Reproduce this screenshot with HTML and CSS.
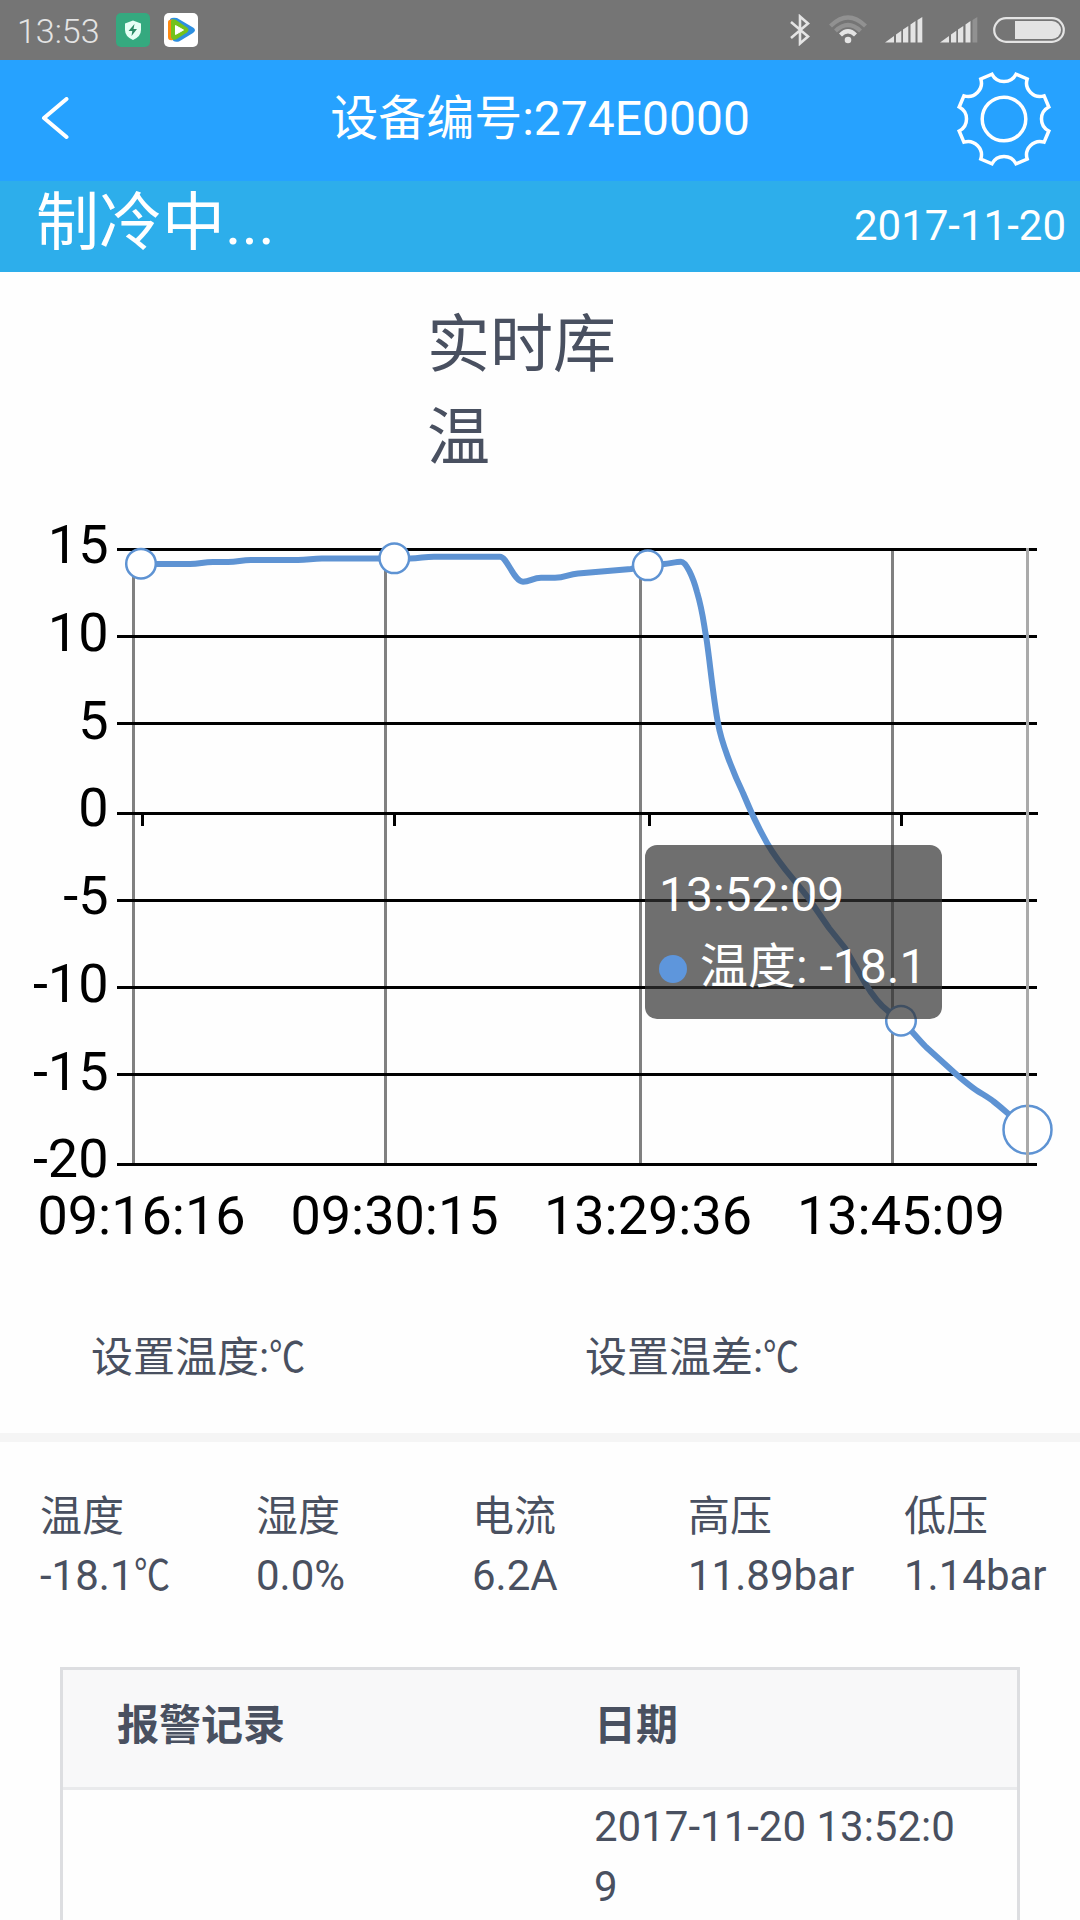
FILE: index.html
```
<!DOCTYPE html>
<html lang="zh-CN">
<head>
  <meta charset="UTF-8" />
  <meta name="viewport" content="width=device-width, initial-scale=1.0" />
  <title>设备编号:274E0000</title>
  <link rel="stylesheet" href="styles.css">
</head>
<body>
  <div class="status-bar">
    <span class="status-time">13:53</span>
    <svg class="app-icon" width="34" height="34" viewBox="0 0 34 34">
      <rect width="34" height="34" rx="5" fill="#35a97f"/>
      <path d="M17 7.500L25 10.500V17Q25 23.500 17 27Q9 23.500 9 17V10.500Z" fill="#e6fff5"/>
      <path d="M18.500 11L12.500 18H16.300L15.500 23L21 16H17.500Z" fill="#2b8a66"/>
    </svg>
    <svg class="app-icon" width="34" height="34" viewBox="0 0 34 34">
      <rect width="34" height="34" rx="5" fill="#fff"/>
      <path d="M6 6Q8 4 13 5L29 14.500Q33 17 29 20L15 28.500Q9 30 8 25Z" fill="#2d8fe0"/>
      <path d="M4 9Q4 6 9 6.500V27Q4 28 4 24Z" fill="#ff8a10"/>
      <path d="M7 8Q8 5 12 7L23 14.500Q26 17 23 19.500L12 26.500Q8 28 7 24Z" fill="#74c21c"/>
      <path d="M11.500 12.500L19.500 17L11.500 21.500Z" fill="#fff" stroke="#fff" stroke-linejoin="round"/>
    </svg>
    <div class="status-right">
      <svg width="20" height="32" viewBox="0 0 20 32" fill="none" stroke="#e4e4e4" stroke-width="2.600">
        <path d="M1 8L18 22.500L10 29.500V2.500L18 9.500L1 24"/>
      </svg>
      <svg class="wifi" width="38" height="32" viewBox="0 0 38 32" fill="none" stroke-width="4.200">
        <path d="M1.500 12Q19 -5 36.500 12" stroke="#919191"/>
        <path d="M6.500 17Q19 5 31.500 17" stroke="#919191"/>
        <path d="M11.500 21Q19 13.500 26.500 21" stroke="#e4e4e4"/>
        <circle cx="19" cy="26" r="3.300" fill="#e4e4e4"/>
      </svg>
      <svg class="signal" width="38" height="26" viewBox="0 0 38 26" fill="#e4e4e4">
        <path d="M0 25.500L9 19V25.500ZM11 17.500L16.300 13.800V25.500H11ZM18 12.500L23.300 9V25.500H18ZM25.500 7.500L30.500 4V25.500H25.500ZM32.500 3L37.300 0V25.500H32.500Z"/>
      </svg>
      <svg class="signal" width="38" height="26" viewBox="0 0 38 26" fill="#e4e4e4">
        <path d="M0 25.500L9 19V25.500ZM11 17.500L16.300 13.800V25.500H11ZM18 12.500L23.300 9V25.500H18ZM25.500 7.500L30.500 4V25.500H25.500Z"/>
        <path d="M32.500 3L37.300 0V25.500H32.500Z" fill="#919191"/>
      </svg>
      <svg class="battery" width="72" height="26" viewBox="0 0 72 26">
        <rect x="1.200" y="1.200" width="69.600" height="23.600" rx="11.800" fill="none" stroke="#e4e4e4" stroke-width="2.200"/>
        <path d="M22 4H59A9 9 0 0 1 59 22H22Z" fill="#e4e4e4"/>
      </svg>
    </div>
  </div>

  <header class="header">
    <svg class="back" width="28" height="44" viewBox="0 0 28 44" fill="none" stroke="#fff" stroke-width="4" stroke-linecap="round" stroke-linejoin="round">
      <path d="M25.500 2L3 21L25.500 40"/>
    </svg>
    <h1>设备编号:274E0000</h1>
    <svg class="gear" width="98" height="98" viewBox="-49 -49 98 98" fill="none" stroke="#fff" stroke-width="3.500">
      <path d="M-12 -44.800A13.500 13.500 0 0 0 12 -44.800L23.200 -40.100A13.500 13.500 0 0 0 40.100 -23.200L44.800 -12A13.500 13.500 0 0 0 44.800 12L40.100 23.200A13.500 13.500 0 0 0 23.200 40.100L12 44.800A13.500 13.500 0 0 0 -12 44.800L-23.200 40.100A13.500 13.500 0 0 0 -40.100 23.200L-44.800 12A13.500 13.500 0 0 0 -44.800 -12L-40.100 -23.200A13.500 13.500 0 0 0 -23.200 -40.100Z"/>
      <circle r="21.800"/>
    </svg>
  </header>

  <div class="state-bar">
    <span class="state">制冷中...</span>
    <span class="date">2017-11-20</span>
  </div>

  <h2 class="chart-title">实时库温</h2>

  <div class="chart">
    <svg width="1080" height="760" viewBox="0 500 1080 760">
      <g class="split-x">
        <path d="M133.500 550V1164M385.500 550V1164M640.500 550V1164M892.500 550V1164"/>
      </g>
      <g class="split-y">
        <path d="M117 549.500H1037M117 636.500H1037M117 723.500H1037M117 813.500H1038M117 900.500H1037M117 987.500H1037M117 1074.500H1037M117 1164.500H1037"/>
        <path d="M142.500 812V826M394.500 812V826M649.500 812V826M901.500 812V826"/>
      </g>
      <g class="y-label">
        <text x="108.500" y="562.500">15</text>
        <text x="108.500" y="650.500">10</text>
        <text x="108.500" y="738.500">5</text>
        <text x="108.500" y="826">0</text>
        <text x="108.500" y="913.500">-5</text>
        <text x="108.500" y="1001.500">-10</text>
        <text x="108.500" y="1089.500">-15</text>
        <text x="108.500" y="1177">-20</text>
      </g>
      <g class="x-label">
        <text x="141.500" y="1233.500">09:16:16</text>
        <text x="394.500" y="1233.500">09:30:15</text>
        <text x="648" y="1233.500">13:29:36</text>
        <text x="901" y="1233.500">13:45:09</text>
      </g>
      <path class="line" d="M141 564H190C200 564 203 562 213 562H228C238 562 241 560 251 560H298C308 560 312 558.500 322 558.500H410C420 558.500 424 556.700 434 556.700H500C507 556.700 514 581.700 523 581.700C530 581.700 533 577.800 541 577.800H555C565 577.800 568 574.500 578 573.500L631 569L648 565.300L664 564C670 563.500 676 561.700 681 561.700C686 561.700 693 577 697 592C703 612 704 626 706 636C709 653 713 697 718 723C721 741 732 770 743 793Q754 820 767 843C780 866 795 880 809 899L829 928L845 948L865 983C871 993 880 1005 888 1011L901 1020.500C906 1024 917 1038 926 1047L957 1075C963 1080 970 1086 976 1090C982 1094 988 1097 993 1101C1001 1107 1016 1121 1027.500 1129.500"/>
      <g class="point">
        <circle cx="141" cy="563.700" r="14.800"/>
        <circle cx="394.300" cy="558.300" r="14.800"/>
        <circle cx="647.800" cy="565.300" r="14.800"/>
        <circle cx="901" cy="1020.700" r="14.800"/>
        <circle cx="1027.500" cy="1129.700" r="24"/>
      </g>
      <path class="pointer" d="M1027.500 548V1163"/>
    </svg>
    <div class="tooltip">
      13:52:09<br><i class="dot"></i>温度: -18.1
    </div>
  </div>

  <div class="settings">
    <div>设置温度:<span class="unit">℃</span></div>
    <div>设置温差:<span class="unit">℃</span></div>
  </div>

  <div class="stats">
    <div class="stat"><span>温度</span><span>-18.1<span class="unit">℃</span></span></div>
    <div class="stat"><span>湿度</span><span>0.0%</span></div>
    <div class="stat"><span>电流</span><span>6.2A</span></div>
    <div class="stat"><span>高压</span><span>11.89bar</span></div>
    <div class="stat"><span>低压</span><span>1.14bar</span></div>
  </div>

  <div class="table">
    <div class="row head">
      <div class="cell">报警记录</div>
      <div class="cell">日期</div>
    </div>
    <div class="row">
      <div class="cell"></div>
      <div class="cell">2017-11-20 13:52:09</div>
    </div>
  </div>
</body>
</html>
```
FILE: styles.css
```
* {
  box-sizing: border-box;
  margin: 0;
  padding: 0;
}
body {
  width: 1080px;
  height: 1920px;
  overflow: hidden;
  display: flex;
  flex-direction: column;
  background: #fefefe;
  color: #495060;
  font-family: Roboto, 'Noto Sans CJK SC', sans-serif;
  font-size: 42px;
  line-height: 60px;
}
body > * {
  flex-shrink: 0;
}
svg {
  display: block;
}
.status-bar {
  display: flex;
  align-items: center;
  height: 60px;
  padding: 0 15px 0 17px;
  background: #757575;
}
.status-time {
  width: 99px;
  padding-top: 1px;
  color: #e4e4e4;
  font-size: 34px;
  font-weight: 300;
}
.app-icon {
  margin-right: 14px;
}
.status-right {
  display: flex;
  align-items: center;
  margin-left: auto;
}
.wifi {
  margin: 0 18px 0 19px;
}
.signal {
  margin-right: 17px;
}
.battery {
  margin-left: -2px;
}
.header {
  display: flex;
  align-items: center;
  justify-content: space-between;
  height: 121px;
  padding: 0 27px 4px 41px;
  background: #26a2ff;
  color: #fff;
}
.header h1 {
  margin-left: 56px;
  font-size: 48px;
  font-weight: 400;
}
.state-bar {
  display: flex;
  justify-content: space-between;
  height: 91px;
  padding: 0 14px 0 36px;
  background: #2daeeb;
  color: #fff;
}
.state {
  font-size: 63px;
  line-height: 84px;
}
.date {
  line-height: 89px;
}
.chart-title {
  width: 200px;
  margin: 26px 0 0 427px;
  font-size: 63px;
  font-weight: 400;
  line-height: 93px;
}
.chart {
  position: relative;
  height: 760px;
  margin-top: 16px;
}
.split-x {
  stroke: #808080;
  stroke-width: 3;
}
.split-y {
  stroke: #000;
  stroke-width: 3;
}
.y-label, .x-label {
  font-size: 54px;
  fill: #000;
  text-anchor: end;
}
.x-label {
  text-anchor: middle;
}
.line {
  fill: none;
  stroke: #5e93d3;
  stroke-width: 6;
  stroke-linejoin: round;
}
.point {
  fill: #fff;
  stroke: #5e93d3;
  stroke-width: 2.5;
}
.pointer {
  stroke: #aaa;
  stroke-width: 3;
}
.tooltip {
  position: absolute;
  left: 645px;
  top: 345px;
  width: 297px;
  height: 174px;
  padding: 14px;
  border-radius: 12px;
  background: rgba(50, 50, 50, 0.7);
  color: #fff;
  font-size: 48px;
  line-height: 72px;
  white-space: nowrap;
}
.dot {
  display: inline-block;
  width: 28px;
  height: 28px;
  margin-right: 13px;
  border-radius: 50%;
  background: #5e96dc;
}
.unit {
  display: inline-block;
  transform: scaleX(0.86);
  transform-origin: left;
}
.settings {
  display: flex;
  height: 182px;
  padding: 68px 0 0 91px;
  border-bottom: 9px solid #f5f5f5;
}
.settings div {
  width: 494px;
}
.stats {
  display: grid;
  grid-template-columns: repeat(5, 216px);
  height: 225px;
  padding: 45px 0 0 40px;
}
.stat {
  display: flex;
  flex-direction: column;
  gap: 0;
  line-height: 59px;
}
.table {
  flex: 1;
  width: 960px;
  margin-left: 60px;
  border: 3px solid #dddee1;
  border-bottom: none;
}
.row {
  display: grid;
  grid-template-columns: 477px 477px;
}
.cell {
  padding: 7px 54px 0;
  word-break: break-all;
}
.head {
  height: 120px;
  background: #f8f8f9;
  border-bottom: 3px solid #e9eaec;
  font-weight: 700;
}
.head .cell {
  padding-top: 26px;
}
```
